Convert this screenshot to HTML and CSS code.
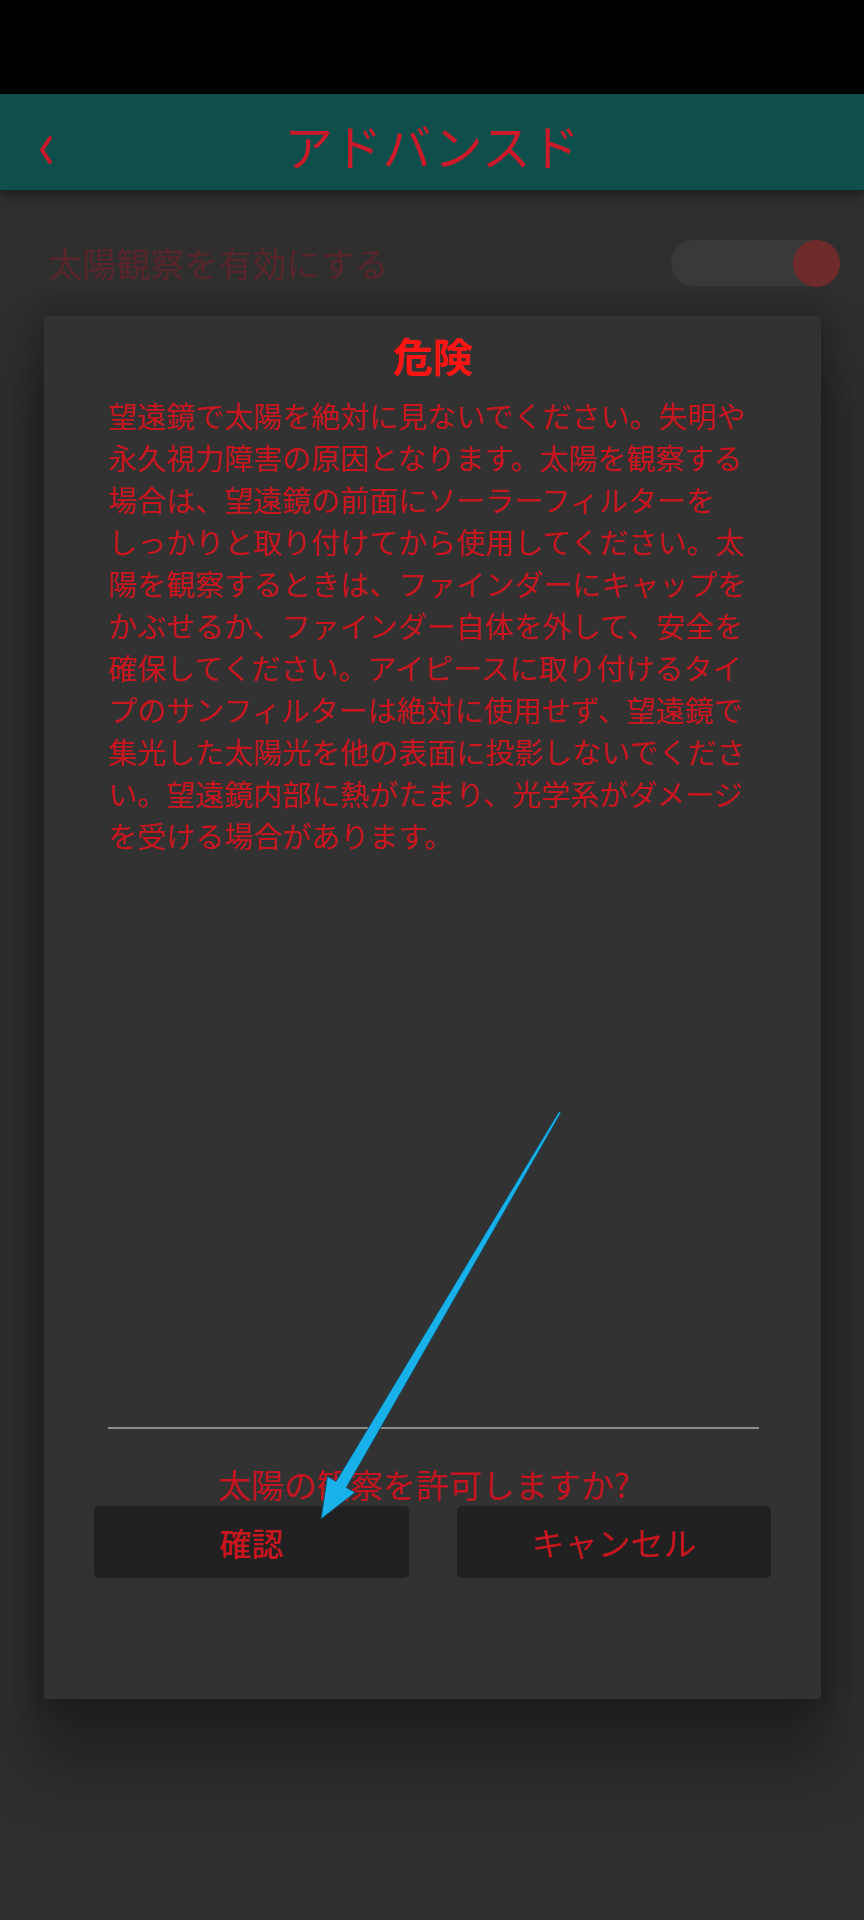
FILE: index.html
```html
<!DOCTYPE html>
<html lang="ja">
<head>
<meta charset="utf-8">
<title>アドバンスド</title>
<link rel="stylesheet" href="styles.css">
</head>
<body>
<div class="status"></div>
<header class="appbar">
  <div class="back">
    <svg width="16" height="30" viewBox="0 0 16 30"><polyline points="12,3 4,15 12,27" fill="none" stroke="#c8182a" stroke-width="4" stroke-linecap="round" stroke-linejoin="round"/></svg>
  </div>
  <h1 class="title">アドバンスド</h1>
  <div></div>
</header>
<main class="content">
  <div class="row">
    <span class="row-label">太陽観察を有効にする</span>
    <span class="toggle"><span class="thumb"></span></span>
  </div>
</main>

<div class="dialog">
  <h2 class="dlg-title">危険</h2>
  <p class="dlg-body">望遠鏡で太陽を絶対に見ないでください。失明や<br>永久視力障害の原因となります。太陽を観察する<br>場合は、望遠鏡の前面にソーラーフィルターを<br>しっかりと取り付けてから使用してください。太<br>陽を観察するときは、ファインダーにキャップを<br>かぶせるか、ファインダー自体を外して、安全を<br>確保してください。アイピースに取り付けるタイ<br>プのサンフィルターは絶対に使用せず、望遠鏡で<br>集光した太陽光を他の表面に投影しないでくださ<br>い。望遠鏡内部に熱がたまり、光学系がダメージ<br>を受ける場合があります。</p>
  <div class="divider"></div>
  <p class="question">太陽の観察を許可しますか?</p>
  <div class="buttons">
    <button class="btn btn-ok">確認</button>
    <button class="btn btn-cancel">キャンセル</button>
  </div>
</div>

<svg class="arrow" width="864" height="1920" viewBox="0 0 864 1920">
  <polygon points="561.0,1112.6 346.4,1487.5 355.0,1492.6 321,1519 327.4,1476.4 336.0,1481.5 559.0,1111.4" fill="#19b1ea" stroke="#1a4a60" stroke-width="1" stroke-linejoin="round"/>
</svg>
</body>
</html>
```
FILE: styles.css
```css
html, body {
  margin: 0;
  padding: 0;
}
body {
  width: 864px;
  height: 1920px;
  background: #2f2f2f;
  font-family: "Noto Sans CJK JP", "Noto Sans", sans-serif;
  position: relative;
  overflow: hidden;
}
.status {
  height: 94px;
  background: #000;
}
.appbar {
  height: 96px;
  background: #0e4f4b;
  display: grid;
  grid-template-columns: 1fr auto 1fr;
  align-items: center;
  box-shadow: 0 4px 10px rgba(0,0,0,0.45);
  position: relative;
  z-index: 1;
}
.back {
  padding-left: 38px;
  padding-top: 16px;
  display: flex;
  align-items: center;
}
.title {
  margin: 0;
  padding-top: 4px;
  font-size: 49px;
  font-weight: 400;
  color: #cc1a2a;
  line-height: 1;
}
.content {
  padding: 0 24px 0 48px;
}
.row {
  height: 146px;
  display: flex;
  align-items: flex-start;
  justify-content: space-between;
  padding-top: 50px;
  box-sizing: border-box;
}
.row-label {
  font-size: 34px;
  line-height: 46px;
  color: #58252a;
}
.toggle {
  width: 169px;
  height: 46px;
  border-radius: 23px;
  background: #393939;
  display: flex;
  justify-content: flex-end;
  align-items: center;
}
.thumb {
  width: 47px;
  height: 47px;
  border-radius: 50%;
  background: #6e2b2b;
}
.dialog {
  position: absolute;
  left: 44px;
  top: 316px;
  width: 777px;
  height: 1383px;
  box-sizing: border-box;
  background: #323232;
  border-radius: 3px;
  box-shadow: 0 55px 60px 14px rgba(8,12,8,0.38), 0 0 26px 8px rgba(0,0,0,0.2);
  display: flex;
  flex-direction: column;
  padding: 13px 0 121px;
}
.dlg-title {
  margin: 0;
  text-align: center;
  font-size: 40px;
  line-height: 52px;
  font-weight: 700;
  color: #ff1414;
}
.dlg-body {
  margin: 13px 0 0 64px;
  font-size: 29px;
  line-height: 42px;
  color: #c8161f;
  white-space: nowrap;
}
.divider {
  margin: auto 62px 0 64px;
  height: 2px;
  background: #8c8c8c;
}
.question {
  margin: 33px 0 0;
  text-align: center;
  font-size: 33px;
  line-height: 44px;
  color: #c4141f;
  padding-right: 18px;
}
.buttons {
  display: flex;
  gap: 48px;
  padding: 0 50px;
}
.btn {
  flex: 1;
  height: 72px;
  border: none;
  border-radius: 5px;
  background: #212121;
  color: #c8161f;
  font-family: "Noto Sans CJK JP", "Noto Sans", sans-serif;
  font-size: 32px;
  font-weight: 400;
  padding: 0;
}
.btn-ok {
  font-weight: 500;
}
.btn-cancel {
  font-size: 33px;
}
.arrow {
  position: absolute;
  left: 0;
  top: 0;
  pointer-events: none;
}
```
